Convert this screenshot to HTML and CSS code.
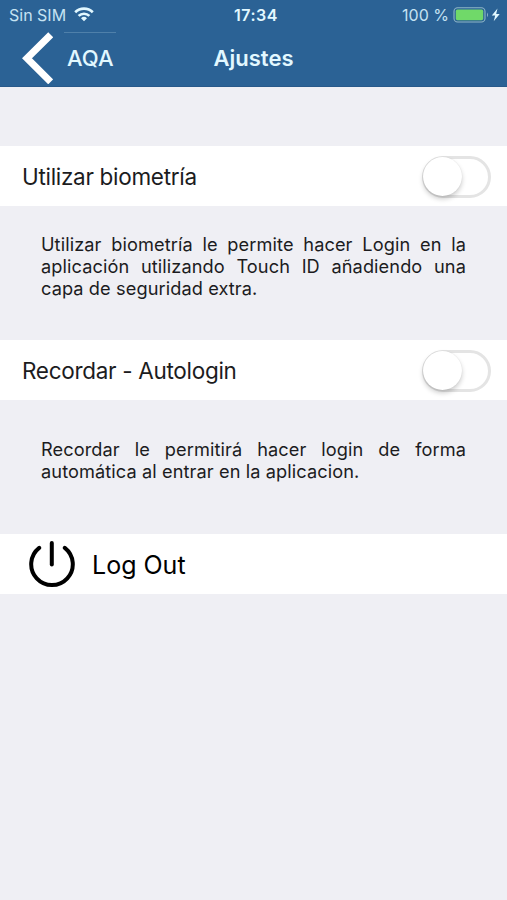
FILE: index.html
```html
<!DOCTYPE html>
<html lang="es">
<head>
<meta charset="utf-8">
<title>Ajustes</title>
<link rel="stylesheet" href="styles.css">
</head>
<body>
<header class="header">
  <div class="status">
    <div class="status-left">
      <span class="carrier">Sin SIM</span>
      <svg class="wifi" width="20" height="15" viewBox="0 0 20 15"><g fill="none" stroke="#e2f8ff" stroke-width="2.7"><path d="M1.2 5.2a12.6 12.6 0 0 1 17.6 0"/><path d="M4.6 8.9a7.8 7.8 0 0 1 10.8 0"/></g><path d="M10 14.2l-3-3a4.3 4.3 0 0 1 6 0z" fill="#e2f8ff"/></svg>
    </div>
    <time class="clock">17:34</time>
    <div class="status-right">
      <span class="percent">100 %</span>
      <svg class="battery" width="48" height="16" viewBox="0 0 48 16"><rect x="1" y=".8" width="31" height="14.2" rx="3.6" fill="none" stroke="#8fb6c6" stroke-width="1.1"/><rect x="2.8" y="2.6" width="27.4" height="10.6" rx="1.6" fill="#70d969"/><path d="M34 5.5q2 2.4 0 4.8z" fill="#8fb6c6"/><path d="M44.5 1.5l-5.7 7h3.4l-1.5 5.8 6-7.4h-3.5z" fill="#e2f8ff"/></svg>
    </div>
  </div>
  <nav class="nav">
    <a class="back"><svg width="32" height="52" viewBox="0 0 32 52"><path d="M29.7 2.8L6 26.3l23.7 23.5" fill="none" stroke="#fff" stroke-width="7"/></svg><span class="back-label">AQA</span></a>
    <h1 class="title">Ajustes</h1>
  </nav>
</header>
<main>
  <section class="row row-first"><span class="label bio">Utilizar biometría</span><span class="switch"><i class="knob"></i></span></section>
  <p class="note note-bio">Utilizar biometría le permite hacer Login en la aplicación utilizando Touch ID añadiendo una capa de seguridad extra.</p>
  <section class="row"><span class="label auto">Recordar - Autologin</span><span class="switch"><i class="knob"></i></span></section>
  <p class="note note-auto">Recordar le permitirá hacer login de forma automática al entrar en la aplicacion.</p>
  <section class="row row-logout"><svg class="power" width="48" height="48" viewBox="0 0 48 48"><g fill="none" stroke="#000" stroke-width="4" stroke-linecap="round"><path d="M12.2 7.8a20.8 20.8 0 1 0 25.6 0"/><path d="M24.8 3v21.5"/></g></svg><span class="logout">Log Out</span></section>
</main>
</body>
</html>
```
FILE: styles.css
```css
* { box-sizing: border-box; }
body { margin: 0; background: #efeff4; color: #1c1c1e; font-family: Inter, "Liberation Sans", sans-serif; height: 900px; overflow: hidden; }
.header { height: 87px; background: #2b6295; border-bottom: 1px solid #28598a; color: #e2f8ff; }
.status { display: grid; grid-template-columns: 1fr auto 1fr; height: 29px; align-items: center; padding: 0 6px 0 9px; }
.status-left, .status-right { display: flex; align-items: center; }
.status-right { justify-content: flex-end; }
.carrier, .percent { font-size: 16px; color: #c5e3f3; }
.wifi { margin-left: 8px; }
.clock { font-size: 16px; font-weight: 600; letter-spacing: .5px; margin-left: 2px; }
.battery { margin-left: 4px; }
.nav { display: grid; grid-template-columns: 1fr auto 1fr; height: 58px; align-items: center; padding: 0 21px; }
.back { display: flex; align-items: center; }
.back-label { border-top: 1px solid #4f80aa; width: 52px; height: 52px; line-height: 50px; margin-left: 11px; padding-left: 3px; font-size: 22px; font-weight: 500; }
.title { margin: 0; font-size: 22px; font-weight: 600; }
.row { display: flex; align-items: center; height: 60px; background: #fff; padding: 1px 16px 0 22px; }
.row-first { margin-top: 59px; }
.label { flex: 1; font-size: 22.5px; letter-spacing: -.3px; }
.switch { width: 69px; height: 42px; border: 3px solid #e4e4e4; border-radius: 21px; }
.knob { display: block; width: 39px; height: 39px; margin: -2px 0 0 -2px; border-radius: 50%; background: #fff; box-shadow: 0 3px 5px rgba(0,0,0,.2), 0 0 1px rgba(0,0,0,.12); }
.note { margin: 0; padding: 26.5px 41px 0; font-size: 18.2px; letter-spacing: .09px; line-height: 22.2px; text-align: justify; }
.note-bio { height: 134px; }
.note-auto { height: 134px; padding-top: 38px; }
.row-logout { padding: 0 16px 0 27px; color: #000; }
.logout { font-size: 25px; margin-left: 17px; padding-top: 1px; }
```
